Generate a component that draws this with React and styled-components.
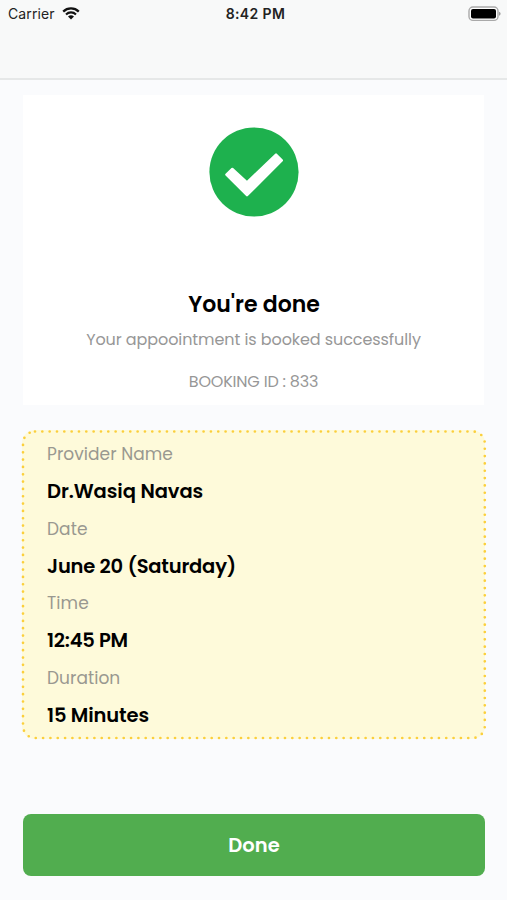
import styled, { createGlobalStyle } from 'styled-components'

const details = [
    { label: 'Provider Name', value: 'Dr.Wasiq Navas', labelSpacing: 0.05, valueSpacing: -0.07 },
    { label: 'Date', value: 'June 20 (Saturday)', labelSpacing: 0.1, valueSpacing: -0.2 },
    { label: 'Time', value: '12:45 PM', labelSpacing: 0.1, valueSpacing: -0.25 },
    { label: 'Duration', value: '15 Minutes', labelSpacing: 0.05, valueSpacing: -0.13 },
]

const WifiIcon = () => (
    <svg width="18" height="13" viewBox="0 0 18 13">
        <path d="M1.2 4.6a11.2 11.2 0 0 1 15.6 0" fill="none" stroke="#111" strokeWidth="2.3" />
        <path d="M4 7.4a7.2 7.2 0 0 1 10 0" fill="none" stroke="#111" strokeWidth="2.1" />
        <path d="M9 12.6L6 9.6a4.3 4.3 0 0 1 6 0z" fill="#111" />
    </svg>
)

const BatteryIcon = () => (
    <svg width="33" height="16" viewBox="0 0 33 16">
        <rect x="1" y="1" width="29" height="13.4" rx="4" fill="#fff" stroke="#a9a9a9" strokeWidth="1.4" />
        <rect x="3" y="3" width="25" height="9.4" rx="2" fill="#000" />
        <path d="M31.2 5.7a2.2 2.2 0 0 1 0 4z" fill="#888" />
    </svg>
)

const CheckIcon = () => (
    <svg width="90" height="90" viewBox="0 0 90 90">
        <circle cx="45" cy="45" r="44.6" fill="#1eb14e" />
        <path
            d="M17.4 47.6L23.3 41.9L38 55.4L67 27.5L72.8 33.4L38 68.2Z"
            fill="#fff"
            stroke="#fff"
            strokeWidth="2.4"
            strokeLinejoin="round"
        />
    </svg>
)

export default function App() {
    return (
        <Screen>
            <GlobalStyle />
            <Header>
                <StatusBar>
                    <Carrier>Carrier <WifiIcon /></Carrier>
                    <Clock>8:42 PM</Clock>
                    <Battery><BatteryIcon /></Battery>
                </StatusBar>
            </Header>
            <Content>
                <Summary>
                    <CheckIcon />
                    <Title>You're done</Title>
                    <Message>Your appoointment is booked successfully</Message>
                    <BookingId>BOOKING ID : 833</BookingId>
                </Summary>
                <Details>
                    <DottedFrame>
                        <rect x="1" y="1.5" width="461.8" height="306.5" rx="12" />
                    </DottedFrame>
                    {details.map(({ label, value, labelSpacing, valueSpacing }) => (
                        <DetailRow key={label}>
                            <Label $spacing={labelSpacing}>{label}</Label>
                            <Value $spacing={valueSpacing}>{value}</Value>
                        </DetailRow>
                    ))}
                </Details>
                <DoneButton>Done</DoneButton>
            </Content>
        </Screen>
    )
}

const GlobalStyle = createGlobalStyle`
    * {
        box-sizing: border-box;
    }

    body {
        margin: 0;
        background-color: #fafbfd;
        font-family: Poppins, Inter, sans-serif;
    }

    h1, p, dl, dt, dd {
        margin: 0;
    }

    svg {
        display: block;
    }
`

const Screen = styled.div`
    width: 507px;
    height: 900px;
    overflow: hidden;
    background-color: #fafbfd;
`

const Header = styled.header`
    height: 80px;
    background-color: #f8f9f9;
    border-bottom: 2px solid #e6e8e8;
`

const StatusBar = styled.div`
    display: grid;
    grid-template-columns: 1fr auto 1fr;
    align-items: center;
    height: 27px;
    padding: 0 6px 0 8px;
    font-family: Inter, sans-serif;
    font-size: 14px;
    color: #222;
`

const Carrier = styled.div`
    display: flex;
    align-items: center;
    gap: 7px;
    letter-spacing: 0.1px;
`

const Clock = styled.div`
    padding-left: 2px;
    font-weight: 600;
    letter-spacing: 0.4px;
`

const Battery = styled.div`
    justify-self: end;
`

const Content = styled.main`
    padding: 15px 22px 0 22px;
`

const Summary = styled.section`
    display: flex;
    flex-direction: column;
    align-items: center;
    height: 310px;
    margin: 0 1px;
    padding-top: 32px;
    background-color: #fff;
`

const Title = styled.h1`
    margin-top: 72px;
    padding-left: 1px;
    font-size: 22px;
    font-weight: 600;
    line-height: 32px;
    white-space: nowrap;
    color: #000;
`

const Message = styled.p`
    margin-top: 7px;
    font-size: 16px;
    line-height: 24px;
    letter-spacing: -0.08px;
    white-space: nowrap;
    color: #979797;
`

const BookingId = styled(Message)`
    margin-top: 18px;
    letter-spacing: -0.2px;
`

const Details = styled.dl`
    position: relative;
    height: 309px;
    margin-top: 25px;
    padding: 6px 25px 0;
    border-radius: 13px;
    background-color: #fefada;
`

const DottedFrame = styled.svg`
    position: absolute;
    top: 0;
    left: 0;
    width: 100%;
    height: 100%;
    overflow: visible;
    fill: none;
    stroke: #fbcf3c;
    stroke-width: 2.7px;
    stroke-linecap: round;
    stroke-dasharray: 0 7.33;
`

const DetailRow = styled.div`
    height: 74.5px;
`

const Label = styled.dt`
    font-size: 17px;
    line-height: 37px;
    letter-spacing: ${({ $spacing }) => $spacing}px;
    color: #999890;
`

const Value = styled.dd`
    font-size: 19.5px;
    font-weight: 600;
    line-height: 37.5px;
    letter-spacing: ${({ $spacing }) => $spacing}px;
    color: #000;
`

const DoneButton = styled.button`
    display: block;
    width: 462px;
    height: 62px;
    margin: 75px 1px 0;
    border: 0;
    border-radius: 8px;
    background-color: #51ad4f;
    font-family: inherit;
    font-size: 19.5px;
    font-weight: 600;
    color: #fff;
`
